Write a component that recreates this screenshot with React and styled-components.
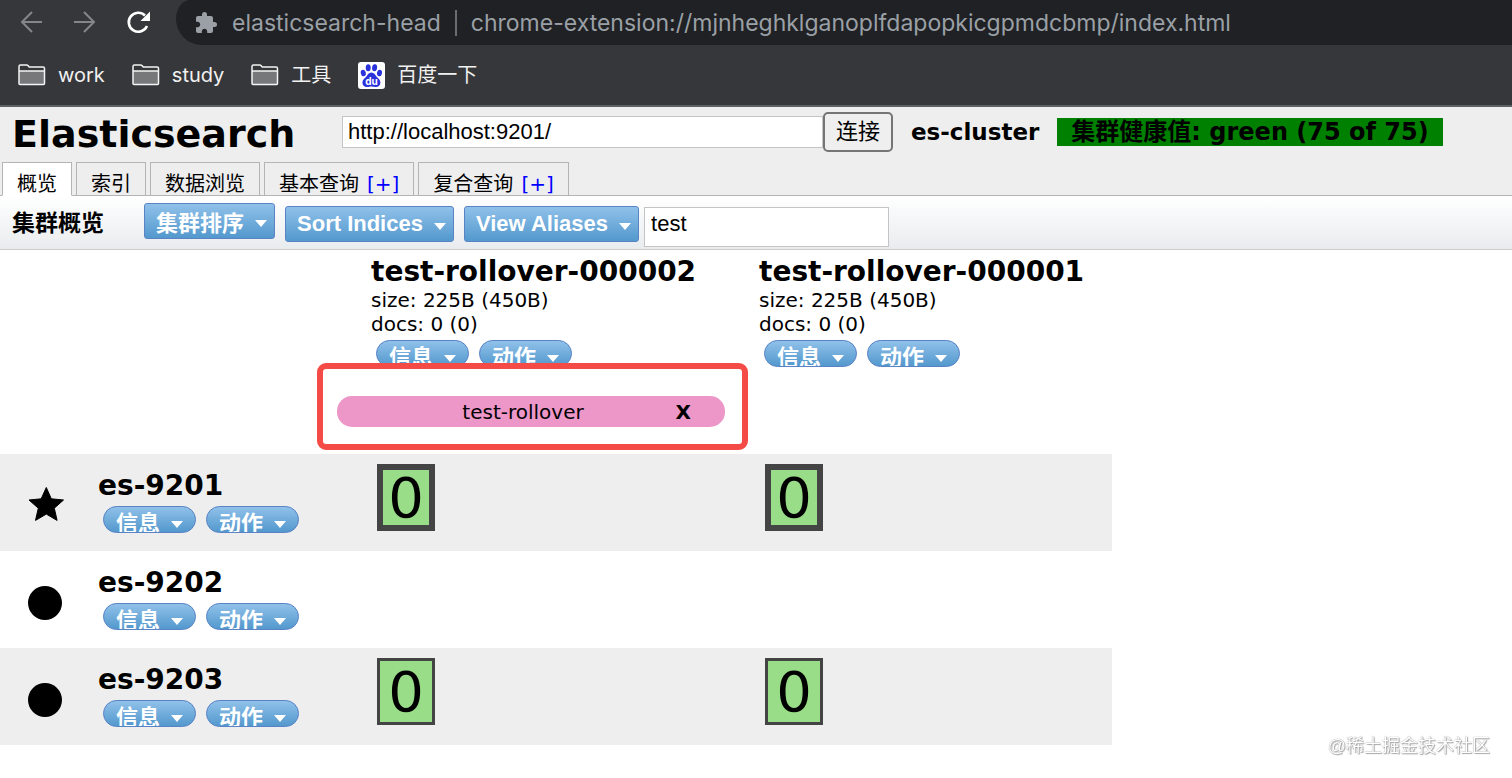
import React, { useState } from 'react'
import styled, { createGlobalStyle } from 'styled-components'

const sans = `'Liberation Sans', 'Noto Sans CJK SC', sans-serif`
const wide = `'DejaVu Sans', 'Noto Sans CJK SC', sans-serif`
const system = `Inter, 'Noto Sans CJK SC', sans-serif`

const GlobalStyle = createGlobalStyle`
  * {
    box-sizing: border-box;
  }
  body {
    margin: 0;
    background: #fff;
    color: #000;
    font-family: ${wide};
    font-size: 20px;
  }
  h1, h2, h3, p {
    margin: 0;
  }
  button, input {
    margin: 0;
    font: inherit;
    color: inherit;
  }
`

/* browser chrome */

const Browser = styled.div`
  background: #36373a;
  border-bottom: 2px solid #606162;
  font-family: ${system};
`

const AddressRow = styled.div`
  display: flex;
  height: 45px;
  padding-left: 18px;
`

const NavButtons = styled.div`
  display: flex;
  align-items: center;
  gap: 26px;
  width: 158px;
  flex-shrink: 0;
`

const NavButton = styled.button`
  display: flex;
  width: 28px;
  padding: 0;
  border: 0;
  background: none;
  color: ${(props) => (props.disabled ? '#858688' : '#fff')};
`

const Omnibox = styled.div`
  display: flex;
  flex: 1;
  min-width: 0;
  align-items: center;
  gap: 14px;
  padding-left: 18px;
  background: #202124;
  border-radius: 14px 0 0 26px / 19px 0 0 26px;
  color: #9aa0a6;
  font-size: 23px;
  line-height: 28px;
  white-space: nowrap;
`

const Separator = styled.span`
  width: 2px;
  height: 26px;
  background: #6a6d70;
`

const Bookmarks = styled.nav`
  display: flex;
  align-items: center;
  gap: 27px;
  height: 60px;
  padding-left: 18px;
`

const Bookmark = styled.a`
  display: flex;
  align-items: center;
  gap: 12px;
  color: #f1f1f1;
  font-size: 20px;
  line-height: 28px;
  text-decoration: none;
`

/* page header */

const Header = styled.header`
  background: #eee;
  border-bottom: 1px solid #b4b4b4;
`

const HeaderTop = styled.div`
  display: flex;
  height: 55px;
  padding-left: 12px;
  white-space: nowrap;
`

const Title = styled.h1`
  width: 330px;
  font-size: 38px;
  line-height: 54px;
`

const ClusterBar = styled.div`
  display: flex;
  align-items: center;
  gap: 18px;
  height: 50px;
`

const Connect = styled.form`
  display: flex;
  align-items: center;
  font-family: ${sans};
  font-size: 22px;
`

const UrlInput = styled.input`
  width: 481px;
  height: 32px;
  padding: 0 5px;
  border: 1px solid #c4c4c4;
  background: #fff;
`

const ConnectButton = styled.button`
  width: 70px;
  height: 40px;
  padding: 0;
  border: 2px solid #757575;
  border-radius: 5px;
  background: #efefef;
  line-height: 32px;
`

const ClusterName = styled.h2`
  font-size: 23px;
  line-height: 28px;
`

const Health = styled.span`
  padding: 0 14px;
  background: #008000;
  font-size: 24px;
  font-weight: bold;
  line-height: 28px;
`

const Tabs = styled.nav`
  display: flex;
  gap: 4px;
  padding-left: 2px;
`

const Tab = styled.div`
  display: flex;
  gap: 8px;
  height: 34px;
  margin-bottom: -1px;
  padding: 0 14px;
  border: 1px solid #b4b4b4;
  border-bottom-color: ${(props) => (props.$active ? '#fff' : '#b4b4b4')};
  background: ${(props) => (props.$active ? '#fff' : '#eee')};
  line-height: 42px;
`

const TabButton = styled.button`
  padding: 0;
  border: 0;
  background: none;
  line-height: 42px;
`

const TabAdd = styled.a`
  color: #00f;
  text-decoration: none;
`

/* overview toolbar */

const Toolbar = styled.div`
  display: flex;
  align-items: baseline;
  gap: 10px;
  height: 54px;
  padding: 7px 12px 0;
  border-bottom: 1px solid #ccc;
  background: linear-gradient(#fff, #e9ecee);
  font-family: ${sans};
`

const ToolbarTitle = styled.h2`
  width: 122px;
  font-size: 23px;
  line-height: 32px;
`

const MenuButton = styled.button`
  display: inline-flex;
  align-items: center;
  gap: 11px;
  height: 36px;
  padding: 0 7px 0 11px;
  border: 1px solid #5a83c6;
  border-radius: 3px;
  background: linear-gradient(#90c1ea, #5398cd);
  color: #fff;
  font-size: 22px;
  font-weight: bold;
  line-height: normal;
  white-space: nowrap;

  &::after {
    content: '';
    margin-top: 4px;
    border: 6px solid transparent;
    border-top: 7px solid #fff;
    border-bottom: 0;
  }
`

const PillButton = styled(MenuButton)`
  align-items: flex-start;
  width: 93px;
  height: 27px;
  padding: 0 12px;
  border-radius: 14px;
  line-height: 34px;
  overflow: hidden;

  &::after {
    margin-top: 14px;
  }
`

const AliasFilter = styled.input`
  width: 245px;
  height: 40px;
  margin-left: -5px;
  padding: 0 6px 5px;
  border: 1px solid #c4c4c4;
  background: #fff;
  font-size: 22px;
`

/* cluster table */

const ClusterTable = styled.table`
  width: 1112px;
  table-layout: fixed;
  border-collapse: collapse;
  text-align: left;
  white-space: nowrap;

  td, th {
    padding: 0;
    vertical-align: top;
    font-weight: normal;
  }
`

const IconCol = styled.col`
  width: 88px;
`

const NodeCol = styled.col`
  width: 248px;
`

const IndexHead = styled.div`
  height: 118px;
  padding: 6px 0 0 35px;
`

const Name = styled.h3`
  font-size: 28px;
  line-height: 32px;
`

const Stat = styled.p`
  line-height: 24px;
`

const Pills = styled.div`
  display: flex;
  gap: 10px;
  padding: 4px 0 0 5px;
`

const AliasCell = styled.div`
  position: relative;
  height: 86px;
  padding-top: 28px;
`

const Alias = styled.div`
  display: grid;
  grid-template-columns: 1fr auto 1fr;
  align-items: center;
  height: 31px;
  margin: 0 -1px 0 1px;
  padding-right: 16px;
  border-radius: 15px;
  background: #ec97c8;
`

const AliasName = styled.span`
  grid-column: 2;
`

const RemoveButton = styled.button`
  justify-self: end;
  padding: 0 18px;
  border: 0;
  background: none;
  font-weight: bold;
`

const Highlight = styled.div`
  position: absolute;
  inset: -5px -24px 4px -19px;
  border: 6px solid #f44b46;
  border-radius: 9px;
  pointer-events: none;
`

const NodeRow = styled.tr`
  height: 97px;

  &:nth-child(odd) {
    background: #eee;
  }
`

const NodeIcon = styled.div`
  display: flex;
  padding: 32px 0 0 28px;
`

const NodeInfo = styled.div`
  padding: 16px 0 0 10px;
`

const Shard = styled.button`
  width: 58px;
  height: 67px;
  margin: 10px 0 0 41px;
  padding: 0;
  border: ${(props) => (props.$primary ? '6px' : '3px')} solid #444;
  background: #99dd88;
  font-size: 56px;
  line-height: 54px;
`

const Watermark = styled.div`
  position: fixed;
  right: 22px;
  bottom: 20px;
  color: #fff;
  font-family: ${sans};
  font-size: 18px;
  line-height: 24px;
  text-shadow: 0 0 1px #777, 1px 1px 1px #aaa;
`

const BackIcon = () => (
  <svg width="28" height="28" viewBox="0 0 28 28" fill="none" stroke="currentColor" strokeWidth="2">
    <path d="M24 13H4M14 3L4 13l10 10" />
  </svg>
)

const ForwardIcon = () => (
  <svg width="28" height="28" viewBox="0 0 28 28" fill="none" stroke="currentColor" strokeWidth="2">
    <path d="M2 13h20M12 3l10 10-10 10" />
  </svg>
)

const ReloadIcon = () => (
  <svg width="28" height="28" viewBox="0 0 28 28" fill="none">
    <path d="M21 17A9.500 9.500 0 1 1 19 6.500" stroke="currentColor" strokeWidth="2.600" />
    <path d="M24 2.500v9.500h-9.500z" fill="currentColor" />
  </svg>
)

const PuzzleIcon = () => (
  <svg width="24" height="24" viewBox="0 0 24 24" fill="currentColor">
    <path d="M20.5 11H19V7c0-1.1-.9-2-2-2h-4V3.500a2.500 2.500 0 0 0-5 0V5H4c-1.100 0-2 .9-2 2v3.800h1.500c1.500 0 2.700 1.200 2.700 2.700S5 16.200 3.500 16.200H2V20c0 1.100.9 2 2 2h3.800v-1.500c0-1.500 1.200-2.700 2.700-2.700s2.700 1.200 2.700 2.700V22H17c1.100 0 2-.9 2-2v-4h1.500a2.500 2.500 0 0 0 0-5z" />
  </svg>
)

const FolderIcon = () => (
  <svg width="28" height="22" viewBox="0 0 28 22">
    <path d="M1 7h25v13.500H1z" fill="#77787a" />
    <path
      d="M1 19.500v-17q0-1.500 1.500-1.500h6q1 0 1.700.8l1 1.200h13.800q1.500 0 1.500 1.500v15q0 1-1 1H2q-1 0-1-1zM1 7h25"
      fill="none"
      stroke="#f4f4f4"
      strokeWidth="1.500"
    />
  </svg>
)

const BaiduIcon = () => (
  <svg width="27" height="27" viewBox="0 0 27 27">
    <rect width="27" height="27" rx="3" fill="#fff" />
    <g fill="#2a32dc">
      <ellipse cx="5.300" cy="11" rx="2.500" ry="3.300" transform="rotate(-12 5.300 11)" />
      <ellipse cx="10.200" cy="5.700" rx="2.500" ry="3.500" />
      <ellipse cx="16.600" cy="5.700" rx="2.500" ry="3.500" transform="rotate(8 16.600 5.700)" />
      <ellipse cx="21.500" cy="11" rx="2.500" ry="3.300" transform="rotate(10 21.500 11)" />
      <path d="M13.400 10.500c2.700 0 3.600 2.300 5 3.900 1.900 2 4 3.200 4 6 0 3-2 4.600-4.700 4.500-1.600 0-2.800-.5-4.300-.5s-2.700.5-4.300.5c-2.700.1-4.700-1.500-4.700-4.500 0-2.800 2.100-4 4-6 1.400-1.600 2.300-3.900 5-3.900z" />
    </g>
    <text x="13.400" y="23" textAnchor="middle" fill="#fff" fontFamily="Inter, sans-serif" fontSize="10" fontWeight="700">
      du
    </text>
  </svg>
)

const StarIcon = () => (
  <svg width="36" height="36" viewBox="0 0 36 36">
    <path
      d="M18.300 1.500l5 11.300 12.200 1.200-9.200 8.200 2.800 12.200-10.800-6.300-10.800 6.300 2.800-12.200L1 14l12.200-1.200z"
      stroke="#000"
      strokeWidth="1"
      strokeLinejoin="round"
    />
  </svg>
)

const CircleIcon = () => (
  <svg width="34" height="38" viewBox="0 0 34 38">
    <circle cx="17" cy="20" r="17" />
  </svg>
)

const bookmarks = [
  { label: 'work', icon: <FolderIcon /> },
  { label: 'study', icon: <FolderIcon /> },
  { label: '工具', icon: <FolderIcon /> },
  { label: '百度一下', icon: <BaiduIcon /> },
]

const tabs = [
  { label: '概览' },
  { label: '索引' },
  { label: '数据浏览' },
  { label: '基本查询', add: true },
  { label: '复合查询', add: true },
]

const indices = ['test-rollover-000002', 'test-rollover-000001']

const nodes = [
  { name: 'es-9201', master: true, hasShards: true, primary: true },
  { name: 'es-9202', master: false, hasShards: false },
  { name: 'es-9203', master: false, hasShards: true, primary: false },
]

const InfoActions = () => (
  <Pills>
    <PillButton type="button">信息</PillButton>
    <PillButton type="button">动作</PillButton>
  </Pills>
)

const BrowserBar = () => (
  <Browser>
    <AddressRow>
      <NavButtons>
        <NavButton type="button" aria-label="Back" disabled>
          <BackIcon />
        </NavButton>
        <NavButton type="button" aria-label="Forward" disabled>
          <ForwardIcon />
        </NavButton>
        <NavButton type="button" aria-label="Reload">
          <ReloadIcon />
        </NavButton>
      </NavButtons>
      <Omnibox>
        <PuzzleIcon />
        <span>elasticsearch-head</span>
        <Separator />
        <span>chrome-extension://mjnheghklganoplfdapopkicgpmdcbmp/index.html</span>
      </Omnibox>
    </AddressRow>
    <Bookmarks>
      {bookmarks.map((item) => (
        <Bookmark key={item.label} href="#">
          {item.icon}
          {item.label}
        </Bookmark>
      ))}
    </Bookmarks>
  </Browser>
)

const ClusterOverview = () => (
  <ClusterTable>
    <colgroup>
      <IconCol />
      <NodeCol />
      <col />
      <col />
    </colgroup>
    <thead>
      <tr>
        <td colSpan={2} />
        {indices.map((index) => (
          <th key={index} scope="col">
            <IndexHead>
              <Name>{index}</Name>
              <Stat>size: 225B (450B)</Stat>
              <Stat>docs: 0 (0)</Stat>
              <InfoActions />
            </IndexHead>
          </th>
        ))}
      </tr>
      <tr>
        <td colSpan={2} />
        <td>
          <AliasCell>
            <Alias>
              <AliasName>test-rollover</AliasName>
              <RemoveButton type="button">X</RemoveButton>
            </Alias>
            <Highlight />
          </AliasCell>
        </td>
        <td />
      </tr>
    </thead>
    <tbody>
      {nodes.map((node) => (
        <NodeRow key={node.name}>
          <td>
            <NodeIcon>{node.master ? <StarIcon /> : <CircleIcon />}</NodeIcon>
          </td>
          <th scope="row">
            <NodeInfo>
              <Name>{node.name}</Name>
              <InfoActions />
            </NodeInfo>
          </th>
          {indices.map((index) => (
            <td key={index}>
              {node.hasShards && (
                <Shard type="button" $primary={node.primary}>
                  0
                </Shard>
              )}
            </td>
          ))}
        </NodeRow>
      ))}
    </tbody>
  </ClusterTable>
)

const App = () => {
  const [activeTab, setActiveTab] = useState('概览')
  const [url, setUrl] = useState('http://localhost:9201/')
  const [filter, setFilter] = useState('test')

  return (
    <>
      <GlobalStyle />
      <BrowserBar />
      <Header>
        <HeaderTop>
          <Title>Elasticsearch</Title>
          <ClusterBar>
            <Connect onSubmit={(e) => e.preventDefault()}>
              <UrlInput aria-label="URL" value={url} onChange={(e) => setUrl(e.target.value)} />
              <ConnectButton type="submit">连接</ConnectButton>
            </Connect>
            <ClusterName>es-cluster</ClusterName>
            <Health>集群健康值: green (75 of 75)</Health>
          </ClusterBar>
        </HeaderTop>
        <Tabs>
          {tabs.map((tab) => (
            <Tab key={tab.label} $active={tab.label === activeTab}>
              <TabButton type="button" onClick={() => setActiveTab(tab.label)}>
                {tab.label}
              </TabButton>
              {tab.add && <TabAdd href="#">[+]</TabAdd>}
            </Tab>
          ))}
        </Tabs>
      </Header>
      <Toolbar>
        <ToolbarTitle>集群概览</ToolbarTitle>
        <MenuButton type="button">集群排序</MenuButton>
        <MenuButton type="button">Sort Indices</MenuButton>
        <MenuButton type="button">View Aliases</MenuButton>
        <AliasFilter aria-label="Filter" value={filter} onChange={(e) => setFilter(e.target.value)} />
      </Toolbar>
      <ClusterOverview />
      <Watermark>@稀土掘金技术社区</Watermark>
    </>
  )
}

export default App
